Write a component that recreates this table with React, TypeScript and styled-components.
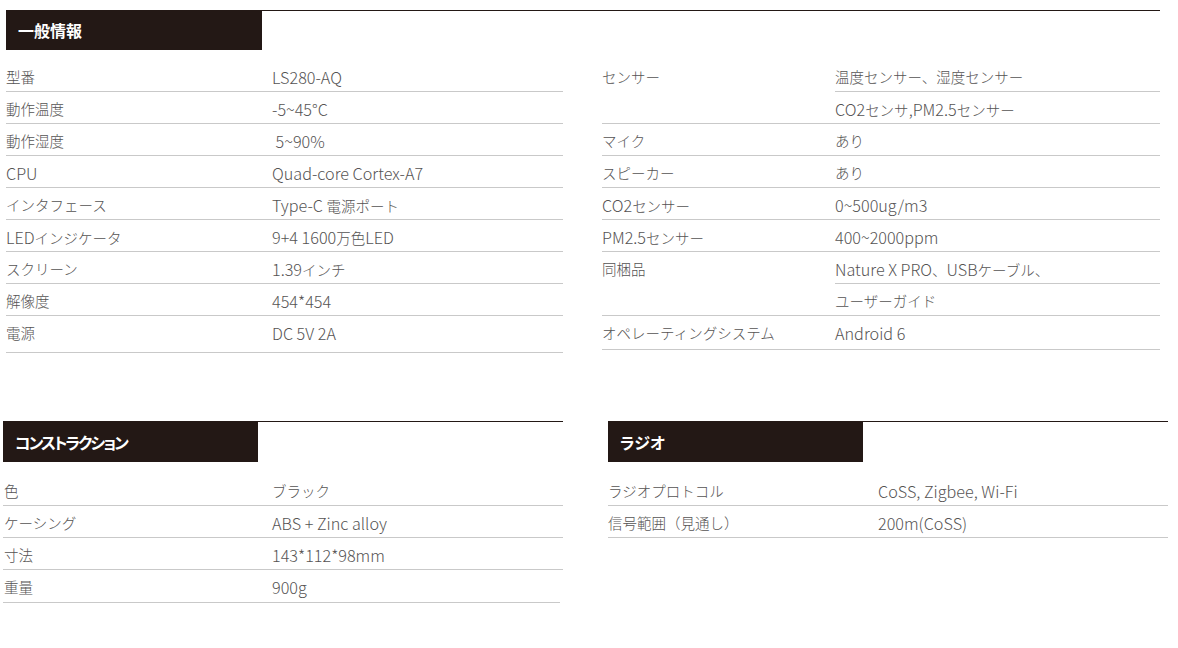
import React from "react";
import styled, { createGlobalStyle } from "styled-components";

const GlobalStyle = createGlobalStyle`
  html, body { margin: 0; padding: 0; background: #ffffff; }
  body {
    font-family: "Noto Sans CJK JP", "Noto Sans", sans-serif;
    color: #595757;
    -webkit-font-smoothing: antialiased;
  }
`;

const Page = styled.div`
  width: 1178px;
  padding-top: 10px;
  display: flex;
  flex-direction: column;
  gap: 68px;
`;

const SectionRow = styled.div<{ $pl: number; $gap: number }>`
  display: flex;
  padding-left: ${(p) => p.$pl}px;
  gap: ${(p) => p.$gap}px;
`;

const Section = styled.section<{ $w: number }>`
  width: ${(p) => p.$w}px;
  border-top: 1px solid #231815;
`;

const HeadBox = styled.div<{ $w: number; $h: number; $ls?: number }>`
  width: ${(p) => p.$w}px;
  height: ${(p) => p.$h}px;
  margin-top: -1px;
  background: #231815;
  color: #ffffff;
  font-weight: 700;
  font-size: 16px;
  letter-spacing: ${(p) => p.$ls ?? 0}px;
  font-feature-settings: "palt";
  display: flex;
  align-items: center;
  padding-left: 12px;
  box-sizing: border-box;
`;

const Columns = styled.div<{ $cols: string; $mt: number }>`
  display: grid;
  grid-template-columns: ${(p) => p.$cols};
  margin-top: ${(p) => p.$mt}px;
`;

const Table = styled.div`
  display: flex;
  flex-direction: column;
`;

const Row = styled.div<{ $labelW: number; $pad: number; $extra: number; $trim: number }>`
  display: grid;
  grid-template-columns: ${(p) => p.$labelW}px 1fr;
  border-bottom: 1px solid #c9c9c9;
  padding-left: ${(p) => p.$pad}px;
  margin-right: ${(p) => p.$trim}px;
  padding-bottom: ${(p) => p.$extra}px;
`;

const Cell = styled.div`
  height: 31px;
  box-sizing: border-box;
  padding-top: 6px;
  font-size: 14.5px;
  line-height: 22px;
  font-weight: 300;
  color: #555353;
  white-space: pre;
`;

const Latin = styled.span`
  font-size: 16.2px;
`;

const ValueStack = styled.div`
  display: flex;
  flex-direction: column;
`;

const ValueLine = styled(Cell)<{ $divider: boolean }>`
  height: ${(p) => (p.$divider ? 32 : 31)}px;
  border-bottom: ${(p) => (p.$divider ? "1px solid #c9c9c9" : "none")};
`;

type Item = { label: string; values: string[] };

const general1: Item[] = [
  { label: "型番", values: ["LS280-AQ"] },
  { label: "動作温度", values: ["-5~45°C"] },
  { label: "動作湿度", values: ["\u00a05~90%"] },
  { label: "CPU", values: ["Quad-core Cortex-A7"] },
  { label: "インタフェース", values: ["Type-C 電源ポート"] },
  { label: "LEDインジケータ", values: ["9+4 1600万色LED"] },
  { label: "スクリーン", values: ["1.39インチ"] },
  { label: "解像度", values: ["454*454"] },
  { label: "電源", values: ["DC 5V 2A"] },
];

const general2: Item[] = [
  { label: "センサー", values: ["温度センサー、湿度センサー", "CO2センサ,PM2.5センサー"] },
  { label: "マイク", values: ["あり"] },
  { label: "スピーカー", values: ["あり"] },
  { label: "CO2センサー", values: ["0~500ug/m3"] },
  { label: "PM2.5センサー", values: ["400~2000ppm"] },
  { label: "同梱品", values: ["Nature X PRO、USBケーブル、", "ユーザーガイド"] },
  { label: "オペレーティングシステム", values: ["Android 6"] },
];

const construction: Item[] = [
  { label: "色", values: ["ブラック"] },
  { label: "ケーシング", values: ["ABS + Zinc alloy"] },
  { label: "寸法", values: ["143*112*98mm"] },
  { label: "重量", values: ["900g"] },
];

const radio: Item[] = [
  { label: "ラジオプロトコル", values: ["CoSS, Zigbee, Wi-Fi"] },
  { label: "信号範囲（見通し）", values: ["200m(CoSS)"] },
];

const LATIN = /^[\u0020-\u007e\u00a0-\u00ff]+$/;

function Text({ s }: { s: string }) {
  const parts = s.split(/([\u0020-\u007e\u00a0-\u00ff]+)/).filter((p) => p !== "");
  return (
    <>
      {parts.map((p, i) =>
        LATIN.test(p) ? <Latin key={i}>{p}</Latin> : <React.Fragment key={i}>{p}</React.Fragment>
      )}
    </>
  );
}

function SpecTable({
  items,
  labelW,
  pad = 0,
  lastExtra = 0,
  lastTrim = 0,
}: {
  items: Item[];
  labelW: number;
  pad?: number;
  lastExtra?: number;
  lastTrim?: number;
}) {
  return (
    <Table>
      {items.map((it, i) => {
        const isLast = i === items.length - 1;
        return (
          <Row
            key={it.label}
            $labelW={labelW}
            $pad={pad}
            $extra={isLast ? lastExtra : 0}
            $trim={isLast ? lastTrim : 0}
          >
            <Cell><Text s={it.label} /></Cell>
            {it.values.length === 1 ? (
              <Cell><Text s={it.values[0]} /></Cell>
            ) : (
              <ValueStack>
                {it.values.map((v, j) => (
                  <ValueLine key={v} $divider={j < it.values.length - 1}>
                    <Text s={v} />
                  </ValueLine>
                ))}
              </ValueStack>
            )}
          </Row>
        );
      })}
    </Table>
  );
}

export default function App() {
  return (
    <>
      <GlobalStyle />
      <Page>
        <SectionRow $pl={6} $gap={0}>
          <Section $w={1154}>
            <HeadBox $w={256} $h={40}>一般情報</HeadBox>
            <Columns $cols="557px 39px 558px" $mt={10}>
              <SpecTable items={general1} labelW={266} lastExtra={5} />
              <div />
              <SpecTable items={general2} labelW={233} lastExtra={2} />
            </Columns>
          </Section>
        </SectionRow>
        <SectionRow $pl={3} $gap={45}>
          <Section $w={560}>
            <HeadBox $w={255} $h={41} $ls={-2}>コンストラクション</HeadBox>
            <Columns $cols="560px" $mt={12}>
              <SpecTable items={construction} labelW={268} pad={1} lastTrim={3} lastExtra={1} />
            </Columns>
          </Section>
          <Section $w={560}>
            <HeadBox $w={255} $h={41}>ラジオ</HeadBox>
            <Columns $cols="560px" $mt={12}>
              <SpecTable items={radio} labelW={270} />
            </Columns>
          </Section>
        </SectionRow>
      </Page>
    </>
  );
}
